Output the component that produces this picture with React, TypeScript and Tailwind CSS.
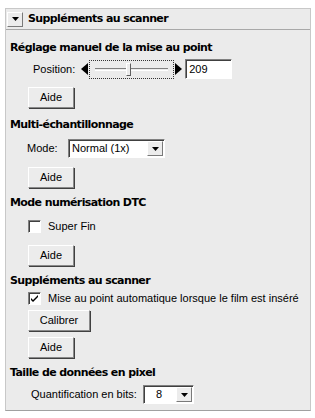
import React from "react";

const body = { fontFamily: '"Liberation Sans", Arial, sans-serif' };
const head = { fontFamily: '"DejaVu Sans", Tahoma, sans-serif' };

function Aide({ label = "Aide", w = "w-[46px]" }: { label?: string; w?: string }) {
  return (
    <button
      className={`${w} h-[21px] bg-[#ececec] border border-t-white border-l-white border-r-[#8a8a8a] border-b-[#8a8a8a] shadow-[1px_1px_0_#404040] text-[11px] text-black leading-none p-0`}
      style={body}
    >
      {label}
    </button>
  );
}

function Heading({ children }: { children: React.ReactNode }) {
  return (
    <div className="h-[14px] flex items-center text-[11px] font-bold text-black tracking-[-0.6px]" style={head}>
      {children}
    </div>
  );
}

function DropArrow() {
  return (
    <div className="w-[16px] h-[15px] bg-[#ececec] border border-t-white border-l-white border-r-[#7a7a7a] border-b-[#7a7a7a] flex items-center justify-center">
      <svg width="7" height="4" viewBox="0 0 7 4">
        <path d="M0 0h7L3.5 4z" fill="#000" />
      </svg>
    </div>
  );
}

function Checkbox({ checked }: { checked?: boolean }) {
  return (
    <div className="w-[13px] h-[13px] bg-white border border-t-[#808080] border-l-[#808080] border-r-white border-b-white shadow-[inset_1px_1px_0_#404040] flex items-center justify-center">
      {checked && (
        <svg width="9" height="9" viewBox="0 0 9 9">
          <path d="M1 4l2 2 5-5v2L3 8 1 6z" fill="#000" />
        </svg>
      )}
    </div>
  );
}

const field =
  "bg-white border border-t-[#808080] border-l-[#808080] border-r-white border-b-white shadow-[inset_1px_1px_0_#404040] flex items-center";

export default function App() {
  return (
    <div className="w-[315px] h-[418px] bg-white pt-[8px] pl-[5px] text-[11px] text-black" style={body}>
      <div className="w-[306px] h-[403px] bg-[#ebebeb] border border-[#c8c8c8] border-b-[#a0a0a0] flex flex-col">
        <div className="flex items-center gap-[5px] pl-[1px] h-[21px] border-b border-[#a8a8a8]">
          <DropArrow />
          <div className="font-bold tracking-[-0.6px]" style={head}>
            Suppléments au scanner
          </div>
        </div>

        <div className="flex flex-col pl-[4px]">
          <div className="mt-[11px]">
            <Heading>Réglage manuel de la mise au point</Heading>
          </div>
          <div className="flex items-center h-[20px] mt-[4px] pl-[23px]">
            <span>Position:</span>
            <svg width="7" height="12" viewBox="0 0 7 12" className="ml-[6px]">
              <path d="M7 0v12L0 6z" fill="#000" />
            </svg>
            <div className="w-[85px] h-[19px] ml-[1px] border border-dotted border-[#333] relative">
              <div className="absolute left-[5px] right-[5px] top-[7px] h-[3px] border-t border-[#808080] border-b border-b-white" />
              <div className="absolute left-[36px] top-[2px] w-[5px] h-[13px] bg-[#ececec] border border-t-white border-l-white border-r-[#606060] border-b-[#606060]" />
            </div>
            <svg width="7" height="12" viewBox="0 0 7 12" className="ml-[1px]">
              <path d="M0 0v12L7 6z" fill="#000" />
            </svg>
            <div className={`ml-[3px] w-[47px] h-[20px] pl-[3px] ${field}`}>209</div>
          </div>
          <div className="mt-[8px] pl-[18px] flex">
            <Aide />
          </div>

          <div className="mt-[10px]">
            <Heading>Multi-échantillonnage</Heading>
          </div>
          <div className="flex items-center h-[19px] mt-[7px] pl-[17px]">
            <span className="w-[41px]">Mode:</span>
            <div className={`w-[97px] h-[19px] pl-[3px] pr-[1px] ${field}`}>
              <span className="flex-1">Normal (1x)</span>
              <DropArrow />
            </div>
          </div>
          <div className="mt-[9px] pl-[18px] flex">
            <Aide />
          </div>

          <div className="mt-[8px]">
            <Heading>Mode numérisation DTC</Heading>
          </div>
          <div className="flex items-center h-[13px] mt-[10px] pl-[18px] gap-[7px]">
            <Checkbox />
            <span>Super Fin</span>
          </div>
          <div className="mt-[12px] pl-[18px] flex">
            <Aide />
          </div>

          <div className="mt-[8px]">
            <Heading>Suppléments au scanner</Heading>
          </div>
          <div className="flex items-center h-[13px] mt-[4px] pl-[18px] gap-[7px]">
            <Checkbox checked />
            <span>Mise au point automatique lorsque le film est inséré</span>
          </div>
          <div className="mt-[5px] pl-[18px] flex">
            <Aide label="Calibrer" w="w-[62px]" />
          </div>
          <div className="mt-[6px] pl-[18px] flex">
            <Aide />
          </div>

          <div className="mt-[8px]">
            <Heading>Taille de données en pixel</Heading>
          </div>
          <div className="flex items-center h-[19px] mt-[5px] pl-[21px]">
            <span className="w-[112px]">Quantification en bits:</span>
            <div className={`w-[51px] h-[19px] pr-[1px] ${field}`}>
              <span className="flex-1 text-right pr-[14px]">8</span>
              <DropArrow />
            </div>
          </div>
        </div>
      </div>
    </div>
  );
}
